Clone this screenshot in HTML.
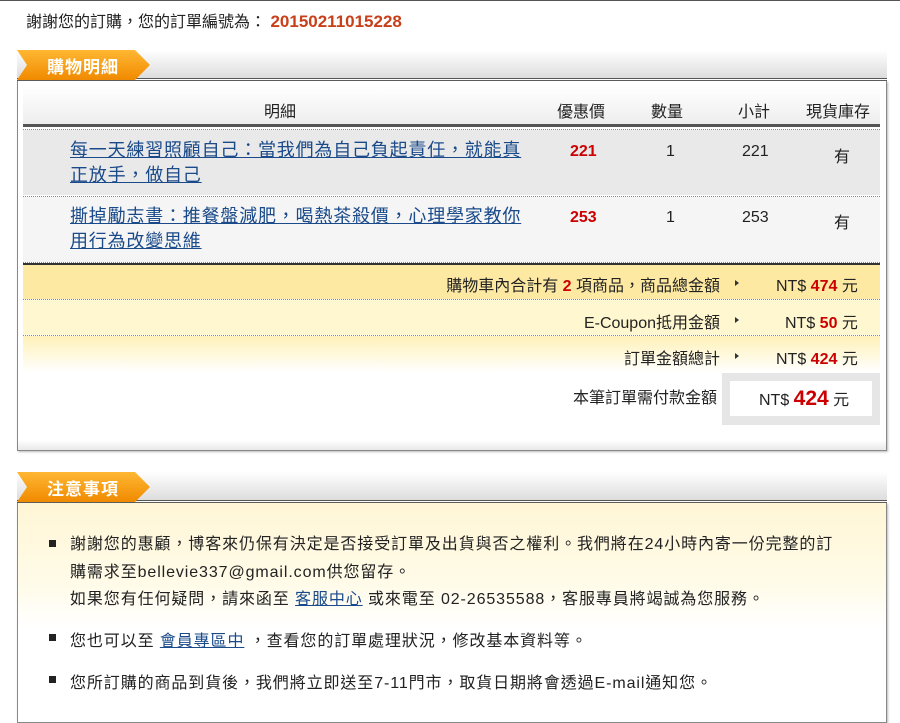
<!DOCTYPE html>
<html><head><meta charset="utf-8"><style>
*{margin:0;padding:0;box-sizing:border-box}
body{width:900px;height:711px;overflow:hidden;background:#fff;font-family:"Liberation Sans","Noto Sans CJK TC",sans-serif;color:#222;position:relative;font-size:16px}
.a{position:absolute;white-space:nowrap}
.tabbar{position:absolute;left:17px;width:870px;height:31px;background:linear-gradient(#fff,#ddd);border-bottom:3px double #555}
.tab{position:absolute;left:0;top:0;width:133px;height:30px;background:linear-gradient(#ffb733,#f08a00);clip-path:polygon(0 0,118px 0,133px 15px,118px 30px,0 30px,10px 15px);color:#fff;font-weight:bold;font-size:17px;padding:3px 0 0 30px;letter-spacing:1px}
.box{position:absolute;left:17px;width:870px;border:1px solid #888;border-top:none;box-shadow:1px 1px 2px #bbb}
.dot{position:absolute;left:23px;width:857px;border-top:1px dotted #888}
a{color:#1a4a8a;text-decoration:underline}
.red{color:#c00;font-weight:bold}
.bul{position:absolute;left:49px;width:7px;height:7px;background:#222}
.it{font-size:18px;line-height:25px;letter-spacing:0.8px}
.n{letter-spacing:0.9px}
.ar{position:absolute;left:735px;width:0;height:0;border-left:4px solid #333;border-top:3px solid transparent;border-bottom:3px solid transparent}
</style></head><body>
<div style="position:absolute;left:0;top:0;width:900px;height:1px;background:#555"></div>
<div class="a" style="left:26px;top:8px;font-size:16px">謝謝您的訂購，您的訂單編號為： <span style="color:#c8401a;font-weight:bold;font-size:17px">20150211015228</span></div>

<div class="tabbar" style="top:50px"><div class="tab">購物明細</div></div>
<div class="box" style="top:81px;height:370px"></div>
<div class="a" style="left:23px;top:86px;width:857px;height:41px;background:linear-gradient(#fff,#eee);border-bottom:3px solid #555"></div>
<div class="a" style="left:264px;top:98px">明細</div>
<div class="a" style="left:557px;top:98px">優惠價</div>
<div class="a" style="left:651px;top:98px">數量</div>
<div class="a" style="left:738px;top:98px">小計</div>
<div class="a" style="left:806px;top:98px">現貨庫存</div>
<div class="dot" style="top:129px"></div>
<div class="a" style="left:23px;top:130px;width:857px;height:65px;background:#e9e9e9"></div>
<div class="dot" style="top:196px"></div>
<div class="a" style="left:23px;top:197px;width:857px;height:65px;background:#f5f5f5"></div>
<div class="a it" style="left:70px;top:138px"><a>每一天練習照顧自己：當我們為自己負起責任，就能真</a><br><a>正放手，做自己</a></div>
<div class="a it" style="left:70px;top:204px"><a>撕掉勵志書：推餐盤減肥，喝熱茶殺價，心理學家教你</a><br><a>用行為改變思維</a></div>
<div class="a red" style="left:570px;top:143px">221</div><div class="a" style="left:666px;top:143px">1</div><div class="a" style="left:742px;top:143px">221</div><div class="a" style="left:834px;top:143px">有</div>
<div class="a red" style="left:570px;top:209px">253</div><div class="a" style="left:666px;top:209px">1</div><div class="a" style="left:742px;top:209px">253</div><div class="a" style="left:834px;top:209px">有</div>
<div class="dot" style="top:262px"></div>
<div class="a" style="left:23px;top:263px;width:857px;height:36px;background:#fde9a2;border-top:2px solid #333"></div>
<div class="dot" style="top:299px"></div>
<div class="a" style="left:23px;top:300px;width:857px;height:35px;background:#fff7cf"></div>
<div class="dot" style="top:335px"></div>
<div class="a" style="left:23px;top:336px;width:857px;height:36px;background:linear-gradient(#fff1b8,#fff)"></div>
<div class="a" style="right:180px;top:272px">購物車內合計有 <span class="red">2</span> 項商品，商品總金額</div>
<div class="a" style="right:180px;top:309px">E-Coupon抵用金額</div>
<div class="a" style="right:180px;top:345px">訂單金額總計</div>
<div class="ar" style="top:280px"></div><div class="ar" style="top:317px"></div><div class="ar" style="top:353px"></div>
<div class="a" style="left:776px;top:272px">NT$ <span class="red">474</span> 元</div>
<div class="a" style="left:785px;top:309px">NT$ <span class="red">50</span> 元</div>
<div class="a" style="left:776px;top:345px">NT$ <span class="red">424</span> 元</div>
<div class="a" style="right:183px;top:384px">本筆訂單需付款金額</div>
<div class="a" style="left:722px;top:373px;width:158px;height:52px;background:#e6e6e6"><div style="position:absolute;left:8px;top:8px;width:142px;height:35px;background:#fff"></div></div>
<div class="a" style="left:759px;top:386px">NT$ <span class="red" style="font-size:21px">424</span> 元</div>
<div class="a" style="left:18px;top:440px;width:868px;height:10px;background:linear-gradient(#fff,#e8e8e8)"></div>

<div class="tabbar" style="top:472px"><div class="tab">注意事項</div></div>
<div class="box" style="top:503px;height:220px;background:linear-gradient(#fff6d6 0,#fffbe8 80px,#fff 125px,#fff)"></div>
<div class="bul" style="top:540px"></div><div class="bul" style="top:634px"></div><div class="bul" style="top:676px"></div>
<div class="a n" style="left:70px;top:531px;line-height:27.5px">謝謝您的惠顧，博客來仍保有決定是否接受訂單及出貨與否之權利。我們將在24小時內寄一份完整的訂<br>購需求至bellevie337@gmail.com供您留存。<br>如果您有任何疑問，請來函至 <a>客服中心</a> 或來電至 02-26535588，客服專員將竭誠為您服務。</div>
<div class="a n" style="left:70px;top:627px">您也可以至 <a>會員專區中</a> ，查看您的訂單處理狀況，修改基本資料等。</div>
<div class="a n" style="left:70px;top:669px">您所訂購的商品到貨後，我們將立即送至7-11門市，取貨日期將會透過E-mail通知您。</div>
</body></html>
